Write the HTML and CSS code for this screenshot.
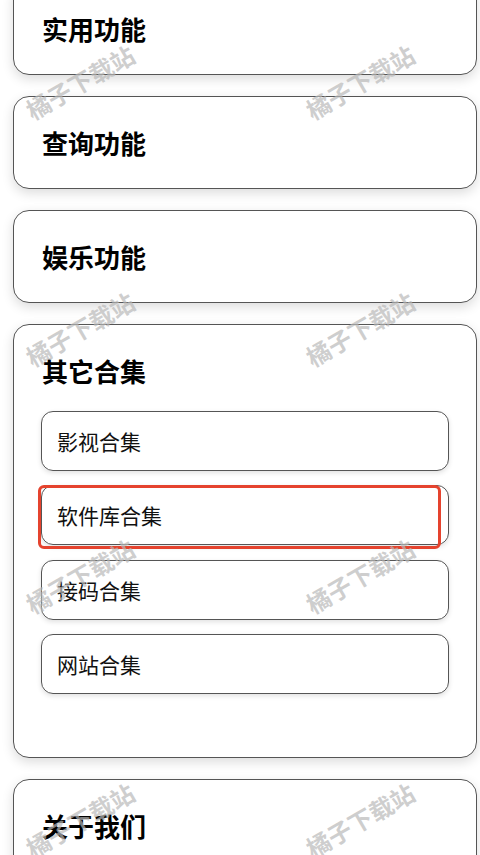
FILE: index.html
```html
<!DOCTYPE html>
<html lang="zh-CN">
<head>
<meta charset="utf-8">
<title>功能</title>
<link rel="stylesheet" href="styles.css">
</head>
<body>
<main class="list">
  <section class="card"><h2 class="card-title">实用功能</h2></section>
  <section class="card"><h2 class="card-title">查询功能</h2></section>
  <section class="card"><h2 class="card-title">娱乐功能</h2></section>
  <section class="card card-open">
    <h2 class="card-title">其它合集</h2>
    <div class="subs">
      <div class="sub">影视合集</div>
      <div class="sub">软件库合集<span class="mark"></span></div>
      <div class="sub">接码合集</div>
      <div class="sub">网站合集</div>
    </div>
  </section>
  <section class="card"><h2 class="card-title">关于我们</h2></section>
</main>
<div class="watermarks" aria-hidden="true">
  <span class="wm wm-l r1">橘子下载站</span><span class="wm wm-r r1">橘子下载站</span>
  <span class="wm wm-l r2">橘子下载站</span><span class="wm wm-r r2">橘子下载站</span>
  <span class="wm wm-l r3">橘子下载站</span><span class="wm wm-r r3">橘子下载站</span>
  <span class="wm wm-l r4">橘子下载站</span><span class="wm wm-r r4">橘子下载站</span>
</div>
</body>
</html>
```

FILE: styles.css
```css
html, body {
  margin: 0;
  padding: 0;
  background: #fff;
  overflow: hidden;
  height: 855px;
}
body {
  font-family: "Noto Sans CJK SC", "Noto Sans", sans-serif;
  color: #111;
  position: relative;
}
.list {
  display: flex;
  flex-direction: column;
  gap: 21px;
  margin: -18px 3px 0 13px;
}
.card {
  border: 1px solid #555;
  border-radius: 16px;
  background: #fff;
  padding: 0 27px;
  box-shadow: 0 4px 12px rgba(0, 0, 0, 0.14);
}
.card-title {
  margin: 0;
  padding: 28px 1px 27px;
  font-size: 26px;
  line-height: 36px;
  font-weight: 700;
  color: #000;
}
.card-open {
  padding-bottom: 63px;
}
.subs {
  display: flex;
  flex-direction: column;
  gap: 14.4px;
  margin-top: -5px;
}
.sub {
  position: relative;
  height: 58px;
  display: flex;
  align-items: center;
  padding: 0 15px;
  border: 1px solid #555;
  border-radius: 12px;
  font-size: 21px;
  color: #111;
  box-shadow: 0 2px 5px rgba(0, 0, 0, 0.12);
}
.mark {
  position: absolute;
  left: -4px;
  top: -1px;
  width: 397px;
  height: 58px;
  border: 3px solid #e5432e;
  border-radius: 6px;
}
.watermarks {
  position: absolute;
  inset: 0;
  pointer-events: none;
}
.wm {
  position: absolute;
  width: 130px;
  text-align: center;
  font-size: 24px;
  font-weight: 700;
  line-height: 26px;
  color: rgba(185, 185, 185, 0.7);
  transform: translate(-50%, -50%) rotate(-30deg);
  white-space: nowrap;
}
.wm-l { left: 80px; }
.wm-r { left: 360px; }
.r1 { top: 82px; }
.r2 { top: 329px; }
.r3 { top: 576px; }
.r4 { top: 820px; }
```
